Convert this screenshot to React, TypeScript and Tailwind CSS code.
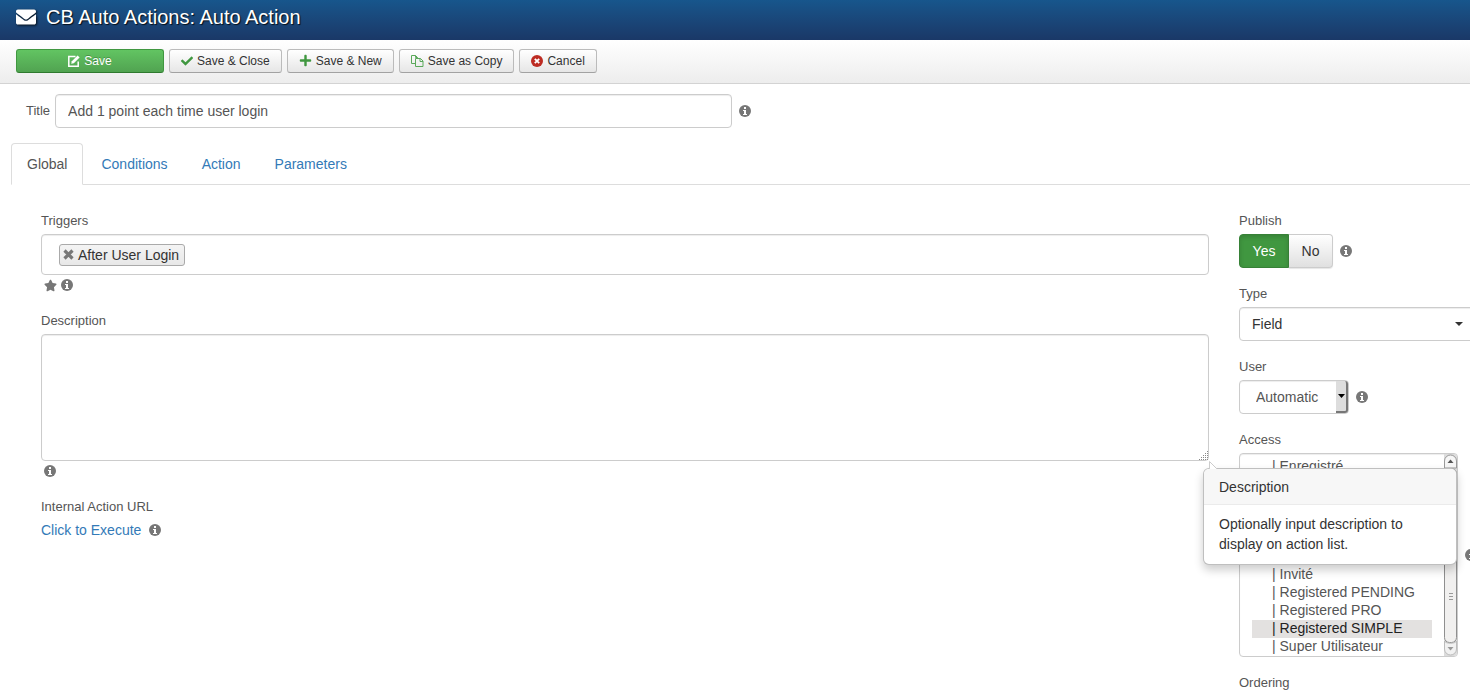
import React, { useState } from 'react';
import { FaCheck, FaEnvelope, FaPlus, FaStar } from 'react-icons/fa';

const tabs = ['Global', 'Conditions', 'Action', 'Parameters'];

const accessLevels = [
  { id: 2, label: '| Enregistré' },
  { id: 3, label: '' },
  { id: 4, label: '' },
  { id: 5, label: '' },
  { id: 6, label: '' },
  { id: 7, label: '| p' },
  { id: 8, label: '| Invité' },
  { id: 9, label: '| Registered PENDING' },
  { id: 10, label: '| Registered PRO' },
  { id: 11, label: '| Registered SIMPLE' },
  { id: 12, label: '| Super Utilisateur' },
];

const EditIcon = () => (
  <svg width="12" height="12" viewBox="0 0 12 12" fill="none" stroke="currentColor" strokeWidth="1.5">
    <path d="M7.5 1.5H.8v9.7h9.4V6.5" />
    <path d="M3.2 8.8l.6-2.6L9.6.4l2 2-5.8 5.8z" fill="currentColor" stroke="none" />
  </svg>
);

const CopyIcon = () => (
  <svg width="13" height="12" viewBox="0 0 13 12" fill="none" stroke="currentColor" strokeWidth="1">
    <path d="M4.500 8.500h-4v-8h4l2 2v1M4.500.5v2h2" />
    <path d="M4.500 3.500h5l2.500 2.500v5.500H4.500zM9 3.500v3h3" />
  </svg>
);

const CancelIcon = () => (
  <svg width="12" height="12" viewBox="0 0 12 12">
    <circle cx="6" cy="6" r="6" fill="#bd2c23" />
    <path d="M3.800 3.800l4.400 4.400M8.200 3.800l-4.400 4.400" stroke="#fff" strokeWidth="1.800" />
  </svg>
);

const RemoveIcon = () => (
  <svg width="11" height="11" viewBox="0 0 11 11" stroke="currentColor" strokeWidth="3.200">
    <path d="M1.500 1.500l8 8M9.500 1.500l-8 8" />
  </svg>
);

const Info = () => (
  <button type="button" aria-label="More information" className="shrink-0 text-[#777]">
    <svg width="12" height="12" viewBox="0 0 12 12">
      <circle cx="6" cy="6" r="6" fill="currentColor" />
      <path d="M5 2h2v2H5zM4 5h3v4h1v1H4V9h1V6H4z" fill="#fff" />
    </svg>
  </button>
);

interface ToolbarButtonProps {
  icon: React.ReactNode;
  label: string;
  primary?: boolean;
}

const ToolbarButton: React.FC<ToolbarButtonProps> = ({ icon, label, primary }) => (
  <button
    type="button"
    className={`flex h-6 items-center justify-center gap-1 rounded-[3px] border text-xs ${
      primary
        ? 'w-37 border-[#409740] border-b-[#2f7a2f] bg-linear-to-b from-[#62c462] to-[#51a351] text-white text-shadow-[0_-1px_0_rgba(0,0,0,0.25)]'
        : 'border-[#bbb] border-b-[#a2a2a2] bg-linear-to-b from-white to-[#e6e6e6] px-[11px] text-[#333]'
    }`}
  >
    {icon}
    {label}
  </button>
);

const Scrollbar = () => (
  <svg width="13" height="202" viewBox="0 0 13 202" className="shrink-0" aria-hidden="true">
    <rect width="13" height="202" fill="#dcdcdc" />
    <path d="M.5 14V7a6 6 0 0112 0v7z" fill="#f6f6f6" stroke="#999" />
    <path d="M3.500 9l3-3.500 3 3.500z" fill="#555" />
    <rect x=".5" y="14.500" width="12" height="174" rx="5" fill="#f1f0ef" stroke="#8f8f8f" />
    <path d="M5 139.500h4M5 142.500h4M5 145.500h4" stroke="#999" />
    <path d="M.5 187c1 3 11 3 12 0v8a6 6 0 01-12 0z" fill="#f1f1f1" stroke="#bbb" />
    <path d="M3.500 193h6l-3 3.500z" fill="#999" />
  </svg>
);

const fieldClass = 'rounded-[4px] border border-[#ccc] bg-white shadow-[inset_0_1px_1px_rgba(0,0,0,0.075)] outline-none';
const labelClass = 'block text-[13px] leading-[18px]';

export default function App() {
  const [activeTab, setActiveTab] = useState('Global');
  const [published, setPublished] = useState(true);

  return (
    <div className="min-h-screen overflow-hidden bg-white font-['Liberation_Sans',Arial,sans-serif] text-sm leading-5 text-[#555]">
      <header className="flex h-10 items-center gap-[10px] bg-linear-to-b from-[#17568c] to-[#1a3867] px-4 pb-[6px] text-white">
        <FaEnvelope size={20} className="drop-shadow-[1px_1px_1px_rgba(0,0,0,0.8)]" />
        <h1 className="text-xl text-shadow-[1px_1px_1px_rgba(0,0,0,0.8)]">CB Auto Actions: Auto Action</h1>
      </header>

      <div className="flex h-11 items-center gap-[5px] border-b border-[#d3d3d3] bg-linear-to-b from-white to-[#ededed] px-4 pb-[2px]">
        <ToolbarButton primary icon={<EditIcon />} label="Save" />
        <ToolbarButton icon={<FaCheck size={12} className="text-[#409740]" />} label="Save & Close" />
        <ToolbarButton icon={<FaPlus size={13} className="text-[#409740]" />} label="Save & New" />
        <ToolbarButton icon={<span className="text-[#5aa85a]"><CopyIcon /></span>} label="Save as Copy" />
        <ToolbarButton icon={<CancelIcon />} label="Cancel" />
      </div>

      <main>
        <div className="flex items-center pt-[10px] pr-1 pl-[26px]">
          <label htmlFor="title" className="mr-[5px] text-[13px]">Title</label>
          <input
            id="title"
            defaultValue="Add 1 point each time user login"
            className={`${fieldClass} mr-[7px] h-[34px] w-[47%] px-3`}
          />
          <Info />
        </div>

        {/* Tabs */}
        <div role="tablist" className="mt-[15px] ml-[11px] flex gap-[2px] border-b border-[#ddd]">
          {tabs.map((tab) => (
            <button
              key={tab}
              type="button"
              role="tab"
              aria-selected={activeTab === tab}
              onClick={() => setActiveTab(tab)}
              className={`-mb-px rounded-t-[4px] border px-[15px] py-[10px] ${
                activeTab === tab
                  ? 'border-[#ddd] border-b-white bg-white text-[#555]'
                  : 'border-transparent text-[#337ab7]'
              }`}
            >
              {tab}
            </button>
          ))}
        </div>

        <div className="flex gap-[30px] pt-[27px] pl-[41px]">
          {/* Left column */}
          <section className="min-w-0 flex-1">
            <label htmlFor="triggers" className={labelClass}>Triggers</label>
            <div className={`${fieldClass} mt-1 flex h-[41px] items-center pl-[17px]`}>
              <span className="flex h-[22px] items-center gap-1 rounded-[3px] border border-[#aaa] bg-linear-to-b from-[#f4f4f4] to-[#e8e8e8] pr-[5px] pl-[3px] text-[#333]">
                <button type="button" aria-label="Remove After User Login" className="text-[#777]">
                  <RemoveIcon />
                </button>
                After User Login
              </span>
              <input id="triggers" className="h-full min-w-0 flex-1 px-2 outline-none" />
            </div>
            <div className="flex h-5 items-center gap-1 pl-[3px]">
              <FaStar size={13} className="text-[#777]" />
              <Info />
            </div>

            <label htmlFor="description" className={`${labelClass} mt-[17px]`}>Description</label>
            <div className="relative mt-1">
              <textarea id="description" className={`${fieldClass} block h-[127px] w-full resize-none px-3 py-[6px]`} />
              <svg width="10" height="10" className="absolute right-[1px] bottom-[1px]" aria-hidden="true">
                <path d="M9 1.500h1M7 3.500h1M9 3.500h1M5 5.500h1M7 5.500h1M9 5.500h1M3 7.500h1M5 7.500h1M7 7.500h1M9 7.500h1M1 9.500h1M3 9.500h1M5 9.500h1M7 9.500h1M9 9.500h1" stroke="#888" />
              </svg>
              <div role="tooltip" className="absolute top-full left-full z-10 mt-[7px] -ml-[6px] w-[254px] rounded-[6px] border border-black/25 bg-white text-[#333] shadow-[0_5px_10px_rgba(0,0,0,0.2)]">
                <svg width="10" height="8" className="absolute bottom-full left-[5px]" aria-hidden="true">
                  <path d="M.5 8V.5L8 8" fill="#fff" stroke="#ccc" />
                </svg>
                <h3 className="rounded-t-[5px] border-b border-[#ebebeb] bg-[#f7f7f7] px-[15px] pt-2 pb-[7px]">Description</h3>
                <p className="px-[15px] pt-[9px] pb-[10px]">Optionally input description to display on action list.</p>
              </div>
            </div>
            <div className="flex h-5 items-center pl-[3px]">
              <Info />
            </div>

            <h2 className={`${labelClass} mt-[17px]`}>Internal Action URL</h2>
            <div className="mt-1 flex items-center gap-2">
              <a href="#execute" className="text-[#337ab7]">Click to Execute</a>
              <Info />
            </div>
          </section>

          {/* Right column */}
          <aside className="w-[231px] shrink-0">
            <h2 className={labelClass}>Publish</h2>
            <div className="mt-1 flex items-center">
              <button
                type="button"
                aria-pressed={published}
                onClick={() => setPublished(true)}
                className="h-[34px] w-[50px] rounded-l-[4px] border border-[#378137] bg-[#409740] text-white shadow-[inset_0_2px_4px_rgba(0,0,0,0.15)]"
              >
                Yes
              </button>
              <button
                type="button"
                aria-pressed={!published}
                onClick={() => setPublished(false)}
                className="mr-[7px] h-[34px] w-11 rounded-r-[4px] border border-l-0 border-[#ccc] bg-linear-to-b from-white to-[#e0e0e0] text-[#333] shadow-[0_1px_1px_rgba(0,0,0,0.1)]"
              >
                No
              </button>
              <Info />
            </div>

            <label htmlFor="type" className={`${labelClass} mt-[17px]`}>Type</label>
            <div className="relative mt-1">
              <select id="type" className={`${fieldClass} h-[34px] w-[240px] max-w-none appearance-none px-3 text-[#333]`}>
                <option>Field</option>
              </select>
              <svg width="8" height="4" className="absolute top-[15px] right-[7px]" aria-hidden="true">
                <path d="M0 0h8L4 4z" fill="#333" />
              </svg>
            </div>

            <label htmlFor="user" className={`${labelClass} mt-[17px]`}>User</label>
            <div className="mt-1 flex items-center gap-[7px]">
              <div className={`${fieldClass} relative h-[34px] w-[110px]`}>
                <select id="user" className="h-full w-full appearance-none pl-4 outline-none">
                  <option>Automatic</option>
                </select>
                <span className="pointer-events-none absolute inset-y-0 right-0 flex w-3 items-center justify-center rounded-r-[3px] border-r-2 border-b-2 border-[#777] bg-[#ddd]">
                  <svg width="7" height="4" className="shrink-0" aria-hidden="true">
                    <path d="M0 0h7L3.500 4z" fill="#000" />
                  </svg>
                </span>
              </div>
              <Info />
            </div>

            <label htmlFor="access" className={`${labelClass} mt-[17px]`}>Access</label>
            <div className="mt-1 flex items-center">
              <div className={`${fieldClass} mr-[7px] flex h-[204px] w-[219px] shrink-0 overflow-hidden`}>
                <select
                  id="access"
                  multiple
                  size={11}
                  defaultValue={['11']}
                  className="h-full min-w-0 flex-1 overflow-hidden pt-1 pr-3 pl-3 outline-none"
                >
                  {accessLevels.map((level) => (
                    <option
                      key={level.id}
                      value={String(level.id)}
                      className="h-[18px] min-h-0 py-0 pr-0 pl-5 leading-[19px] checked:bg-[#e3e1e0] checked:text-[#222]"
                    >
                      {level.label}
                    </option>
                  ))}
                </select>
                <Scrollbar />
              </div>
              <Info />
            </div>

            <h2 className={`${labelClass} mt-[17px]`}>Ordering</h2>
          </aside>
        </div>
      </main>
    </div>
  );
}
